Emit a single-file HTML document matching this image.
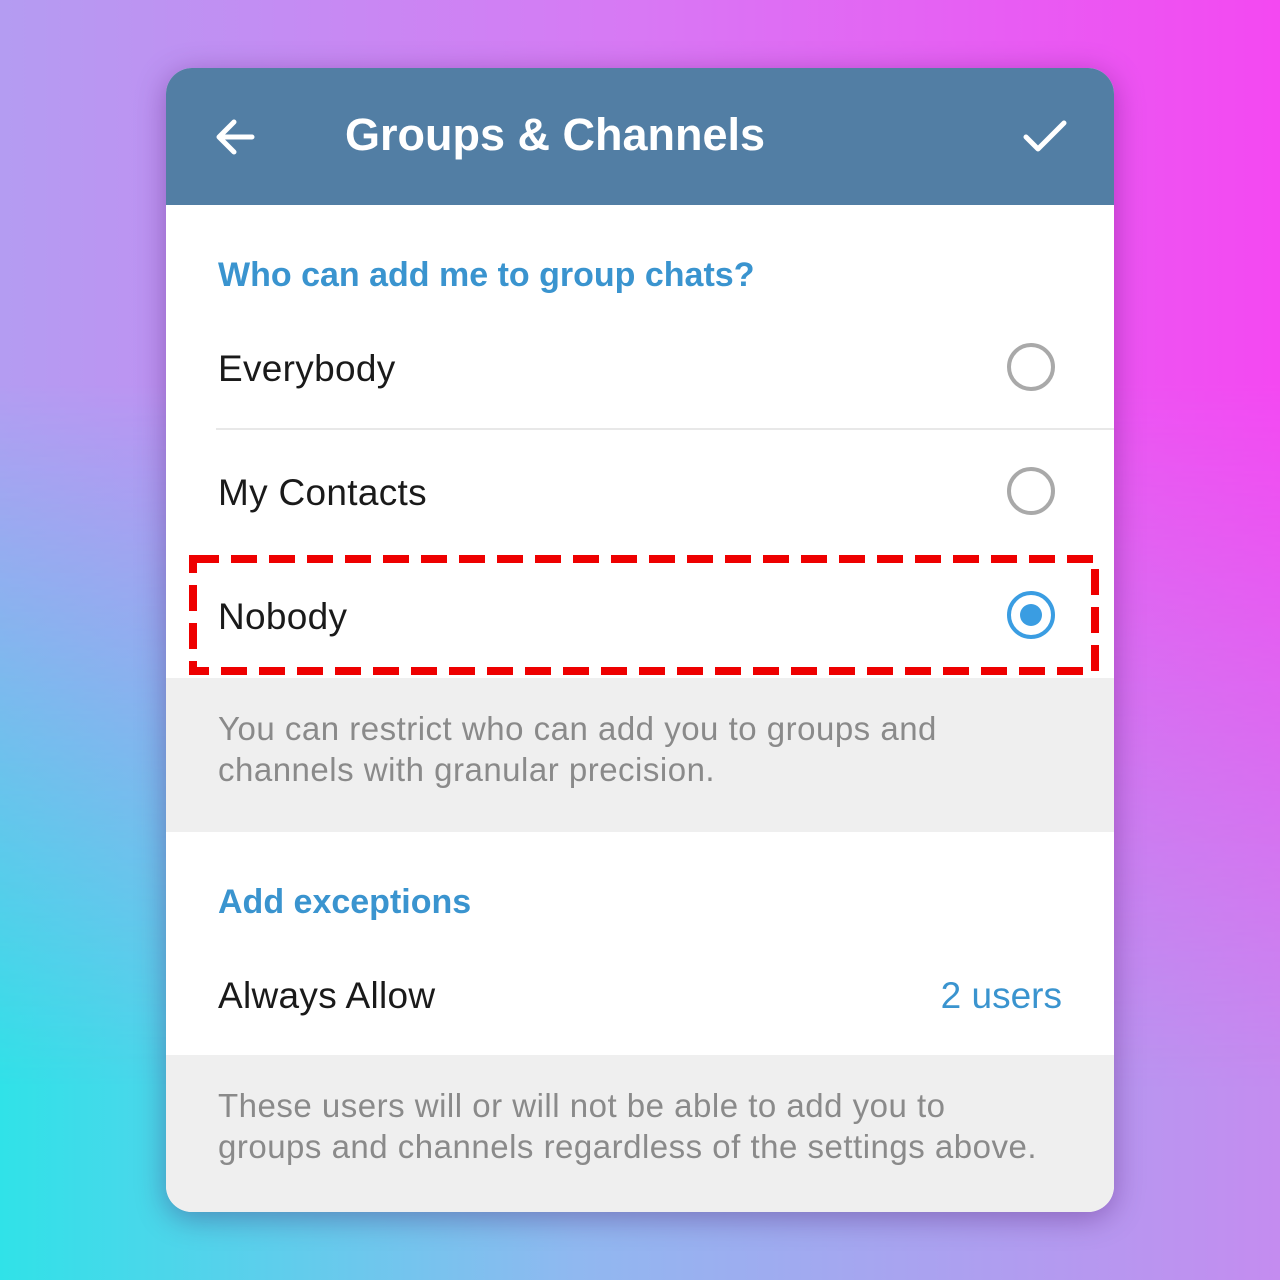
<!DOCTYPE html>
<html><head><meta charset="utf-8"><style>
html,body{margin:0;padding:0}
body{width:1280px;height:1280px;position:relative;overflow:hidden;font-family:"Liberation Sans",sans-serif;
background:linear-gradient(to right,#30e2e8 0%,#90b8f0 45%,#c48cf0 100%);}
.top{position:absolute;left:0;top:0;width:1280px;height:1280px;background:linear-gradient(to right,#b49cf2 0%,#d878f4 50%,#f448f2 100%);-webkit-mask-image:linear-gradient(to bottom,#000 0%,#000 30%,transparent 85%);mask-image:linear-gradient(to bottom,#000 0%,#000 30%,transparent 85%)}
.card{position:absolute;left:166px;top:68px;width:948px;height:1144px;border-radius:26px;overflow:hidden;background:#fff;box-shadow:0 6px 30px rgba(60,0,90,.35)}
.hdr{position:absolute;left:0;top:0;width:948px;height:137px;background:#527ea4}
.title{position:absolute;left:179px;top:41px;color:#fff;font-size:45px;font-weight:bold;letter-spacing:0}
.lbl{position:absolute;left:52px;font-size:37px;color:#1a1a1a;letter-spacing:.3px}
.blue{position:absolute;left:52px;font-size:34px;color:#3a94cf;font-weight:bold}
.gray{position:absolute;left:0;width:948px;background:#efefef}
.gtxt{position:absolute;left:52px;font-size:33px;color:#8a8a8a;line-height:41px;letter-spacing:.5px}
.radio{position:absolute;left:841px;width:48px;height:48px;border-radius:50%;box-sizing:border-box;border:4px solid #a9a9a9}
</style></head><body>
<div class="top"></div>
<div class="card">
 <div class="hdr">
  <svg style="position:absolute;left:48px;top:48px" width="42" height="42" viewBox="0 0 42 42"><path d="M38 21H6M20 6L5 21L20 36" stroke="#fff" stroke-width="5" fill="none" stroke-linecap="round" stroke-linejoin="round"/></svg>
  <div class="title">Groups &amp; Channels</div>
  <svg style="position:absolute;left:856px;top:50px" width="46" height="36" viewBox="0 0 46 36"><path d="M4 19L16 31L42 5" stroke="#fff" stroke-width="5" fill="none" stroke-linecap="round" stroke-linejoin="round"/></svg>
 </div>
 <div class="blue" style="top:188px">Who can add me to group chats?</div>
 <div class="lbl" style="top:280px">Everybody</div>
 <div class="radio" style="top:275px"></div>
 <div style="position:absolute;left:50px;top:360px;width:898px;height:2px;background:#e8e8e8"></div>
 <div class="lbl" style="top:404px">My Contacts</div>
 <div class="radio" style="top:399px"></div>
 <div class="lbl" style="top:528px">Nobody</div>
 <div class="radio" style="top:523px;border-color:#3a9de2"><div style="position:absolute;left:9px;top:9px;width:22px;height:22px;border-radius:50%;background:#3a9de2"></div></div>
 <div class="gray" style="top:610px;height:154px"><div class="gtxt" style="top:30px">You can restrict who can add you to groups and<br>channels with granular precision.</div></div>
 <div class="blue" style="top:815px">Add exceptions</div>
 <div class="lbl" style="top:907px">Always Allow</div>
 <div style="position:absolute;right:52px;top:907px;font-size:37px;color:#3a94cf">2 users</div>
 <div class="gray" style="top:987px;height:157px"><div class="gtxt" style="top:30px">These users will or will not be able to add you to<br>groups and channels regardless of the settings above.</div></div>
</div>
<svg style="position:absolute;left:188px;top:554px" width="912" height="122"><rect x="5" y="5" width="902" height="112" fill="none" stroke="#ee0000" stroke-width="8" stroke-dasharray="26 12"/></svg>
</body></html>
